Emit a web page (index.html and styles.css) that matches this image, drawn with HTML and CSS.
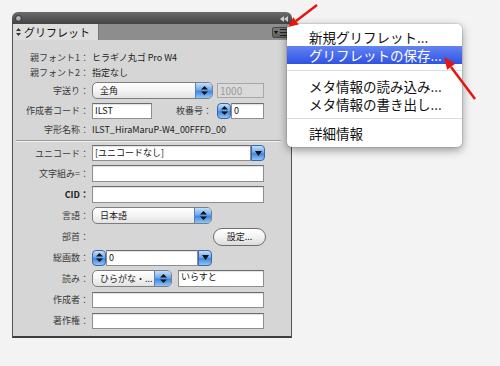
FILE: index.html
```html
<html>

<head>
  <meta charset="utf-8">
  <meta name="viewport" content="width=device-width, initial-scale=1.0">
  <link rel="stylesheet" href="styles.css">
</head>

<body>
  <div id="stage">
    <div class="panel">
      <div class="titlebar">
        <span class="close"></span>
        <svg class="collapse" width="8" height="6" viewBox="0 0 8 6">
          <polygon points="0,3 4,0 4,6" fill="#cfcfcf" />
          <polygon points="4,3 8,0 8,6" fill="#cfcfcf" />
        </svg>
      </div>
      <div class="tabrow">
        <div class="tab">
          <svg class="updown" width="5" height="8" viewBox="0 0 5 8">
            <polygon points="2.5,0 5,3 0,3" fill="#333" />
            <polygon points="2.5,8 5,5 0,5" fill="#333" />
          </svg>
          グリフレット
        </div>
        <div class="menubtn">
          <svg width="15" height="9" viewBox="0 0 15 9">
            <polygon points="1,3 5,3 3,6" fill="#111" />
            <rect x="7" y="1" width="7" height="1" fill="#222" />
            <rect x="7" y="4" width="7" height="1" fill="#222" />
            <rect x="7" y="7" width="7" height="1" fill="#222" />
          </svg>
        </div>
      </div>

      <div class="body">
        <div class="row info">
          <div class="label">親フォント1：</div>
          <div class="ctrl value">ヒラギノ丸ゴ Pro W4</div>
        </div>
        <div class="row info">
          <div class="label">親フォント2：</div>
          <div class="ctrl value">指定なし</div>
        </div>
        <div class="row r20">
          <div class="label">字送り：</div>
          <div class="ctrl">
            <div class="popup w121"><span class="ptext">全角</span><span class="pbtn"><svg width="7" height="9" viewBox="0 0 7 9"><polygon points="3.5,0 7,3.5 0,3.5" fill="#111" /><polygon points="3.5,9 7,5.5 0,5.5" fill="#111" /></svg></span></div>
            <div class="field disabled w47">1000</div>
          </div>
        </div>
        <div class="row">
          <div class="label">作成者コード：</div>
          <div class="ctrl">
            <div class="field w60">ILST</div>
            <div class="sublabel">枚番号：</div>
            <div class="spin"><svg width="7" height="9" viewBox="0 0 7 9"><polygon points="3.5,0 7,3.5 0,3.5" fill="#111" /><polygon points="3.5,9 7,5.5 0,5.5" fill="#111" /></svg></div>
            <div class="field w33">0</div>
          </div>
        </div>
        <div class="row r16">
          <div class="label">字形名称：</div>
          <div class="ctrl value">ILST_HiraMaruP-W4_00FFFD_00</div>
        </div>

        <div class="sep"></div>

        <div class="row r20">
          <div class="label">ユニコード：</div>
          <div class="ctrl">
            <div class="field w159">[ユニコードなし]</div>
            <div class="dbtn"><svg width="7" height="5" viewBox="0 0 7 5"><polygon points="0,0 7,0 3.5,5" fill="#111" /></svg></div>
          </div>
        </div>
        <div class="row">
          <div class="label">文字組み=：</div>
          <div class="ctrl"><div class="field tall w172"></div></div>
        </div>
        <div class="row">
          <div class="label cid">CID：</div>
          <div class="ctrl"><div class="field tall w172"></div></div>
        </div>
        <div class="row">
          <div class="label">言語：</div>
          <div class="ctrl">
            <div class="popup w120"><span class="ptext">日本語</span><span class="pbtn"><svg width="7" height="9" viewBox="0 0 7 9"><polygon points="3.5,0 7,3.5 0,3.5" fill="#111" /><polygon points="3.5,9 7,5.5 0,5.5" fill="#111" /></svg></span></div>
          </div>
        </div>
        <div class="row">
          <div class="label">部首：</div>
          <div class="ctrl">
            <div class="pill">設定...</div>
          </div>
        </div>
        <div class="row">
          <div class="label">総画数：</div>
          <div class="ctrl">
            <div class="spin"><svg width="7" height="9" viewBox="0 0 7 9"><polygon points="3.5,0 7,3.5 0,3.5" fill="#111" /><polygon points="3.5,9 7,5.5 0,5.5" fill="#111" /></svg></div>
            <div class="field w92">0</div>
            <div class="dbtn"><svg width="7" height="5" viewBox="0 0 7 5"><polygon points="0,0 7,0 3.5,5" fill="#111" /></svg></div>
          </div>
        </div>
        <div class="row">
          <div class="label">読み：</div>
          <div class="ctrl">
            <div class="popup w80"><span class="ptext">ひらがな・...</span><span class="pbtn"><svg width="7" height="9" viewBox="0 0 7 9"><polygon points="3.5,0 7,3.5 0,3.5" fill="#111" /><polygon points="3.5,9 7,5.5 0,5.5" fill="#111" /></svg></span></div>
            <div class="field tall top w86">いらすと</div>
          </div>
        </div>
        <div class="row">
          <div class="label">作成者：</div>
          <div class="ctrl"><div class="field w172"></div></div>
        </div>
        <div class="row">
          <div class="label">著作権：</div>
          <div class="ctrl"><div class="field w172"></div></div>
        </div>
      </div>
    </div>

    <!-- flyout menu from the panel button -->
    <div class="menu">
      <div class="item">新規グリフレット...</div>
      <div class="item active">グリフレットの保存...</div>
      <div class="msep first"></div>
      <div class="item">メタ情報の読み込み...</div>
      <div class="item">メタ情報の書き出し...</div>
      <div class="msep"></div>
      <div class="item">詳細情報</div>
    </div>

    <svg class="arrows" width="500" height="366" viewBox="0 0 500 366">
      <line x1="317" y1="5" x2="296" y2="21" stroke="#e3170f" stroke-width="2.5" />
      <polygon points="288,27 298.7,24.6 293.3,17.3" fill="#e3170f" />
      <line x1="475" y1="99" x2="451" y2="67" stroke="#e3170f" stroke-width="2.5" />
      <polygon points="444,57 455.2,63.7 447.2,69.7" fill="#e3170f" />
    </svg>
  </div>
</body>

</html>
```

FILE: styles.css
```css
* {
  box-sizing: border-box;
}

body {
  margin: 0;
  padding: 0;
  background-color: #f3f3f3;
  font-family: "Noto Sans CJK JP", "Noto Sans", sans-serif;
}

#stage {
  position: relative;
  width: 500px;
  height: 366px;
  overflow: hidden;
}

.panel {
  margin-left: 12px;
  padding-top: 12px;
  width: 280px;
}

.titlebar {
  display: flex;
  align-items: center;
  justify-content: space-between;
  height: 12px;
  padding: 0 4px 0 3px;
  border-radius: 6px 6px 0 0;
  background: linear-gradient(#6c6c6c, #434343);
}

.close {
  width: 7px;
  height: 7px;
  border-radius: 50%;
  background: radial-gradient(circle at 40% 35%, #c8c8c8, #7a7a7a);
  border: 1px solid #3a3a3a;
}

.titlebar .collapse {
  margin-top: 1px;
}

.tabrow {
  display: flex;
  align-items: stretch;
  height: 16px;
  background-color: #8d8d8d;
  border-left: 1px solid #555;
  border-right: 1px solid #555;
}

.tab {
  display: flex;
  align-items: center;
  gap: 3px;
  width: 86px;
  padding-left: 3px;
  background-color: #dedede;
  border-right: 1px solid #777;
  font-size: 11px;
  line-height: 16px;
  color: #111;
}

.menubtn {
  display: flex;
  align-items: center;
  justify-content: center;
  margin: 3px 2px 2px auto;
  width: 17px;
  border-radius: 2px;
  background: linear-gradient(#7a7a7a, #5f5f5f);
  border: 1px solid #4a4a4a;
}

.body {
  padding: 10px 0 5px 0;
  background-color: #d6d6d6;
  border: 1px solid #555;
  border-top: none;
  border-bottom: 2px solid #3e3e3e;
}

.row {
  display: flex;
  align-items: center;
  height: 21px;
  font-size: 9px;
  color: #3a3a3a;
}

.row.info {
  height: 15px;
}

.row.r20 {
  height: 20px;
}

.row.r16 {
  height: 16px;
}

.label {
  width: 76px;
  margin-right: 3px;
  text-align: right;
  white-space: nowrap;
  line-height: 13px;
}

.label.cid {
  font-weight: bold;
  color: #222;
}

.ctrl {
  display: flex;
  align-items: center;
  width: 174px;
  white-space: nowrap;
}

.value {
  color: #222;
  line-height: 13px;
}

.sep {
  height: 6px;
  margin: 0 10px 0 3px;
  padding-top: 3px;
}

.sep::before {
  content: "";
  display: block;
  border-top: 1px solid #9c9c9c;
  border-bottom: 1px solid #f2f2f2;
}

.field {
  height: 16px;
  padding-left: 2px;
  background-color: #fff;
  border: 1px solid #8e8e8e;
  border-top-color: #6c6c6c;
  box-shadow: inset 0 1px 1px rgba(0, 0, 0, 0.12);
  font-size: 9px;
  line-height: 14px;
  color: #111;
  overflow: hidden;
}

.field.tall {
  height: 17px;
}

.field.top {
  line-height: 11px;
}

.field.disabled {
  height: 15px;
  margin-left: 4px;
  background-color: #dadada;
  border-color: #a8a8a8;
  box-shadow: none;
  color: #9a9a9a;
  font-size: 10px;
  line-height: 13px;
}

.w33 { width: 33px; }
.w47 { width: 47px; }
.w60 { width: 60px; }
.w86 { width: 86px; margin-left: 6px; }
.w92 { width: 92px; }
.w159 { width: 159px; }
.w172 { width: 172px; }

.sublabel {
  margin-left: 24px;
  width: 41px;
  font-size: 9px;
}

.popup {
  display: flex;
  height: 17px;
  border: 1px solid #7e7e7e;
  border-radius: 5px;
  background: linear-gradient(#ffffff, #f4f4f4 50%, #e2e2e2);
  overflow: hidden;
}

.w121 { width: 121px; }
.w120 { width: 120px; }
.w80 { width: 80px; }

.ptext {
  flex: 1;
  padding-left: 7px;
  font-size: 9px;
  line-height: 15px;
  color: #222;
  overflow: hidden;
}

.pbtn,
.spin,
.dbtn {
  display: flex;
  align-items: center;
  justify-content: center;
  background: linear-gradient(#c3e0fb, #6eaaee 45%, #3f86e2 55%, #8fc6f6);
}

.pbtn {
  width: 17px;
  border-left: 1px solid #5b7fb0;
}

.spin {
  width: 14px;
  height: 16px;
  border: 1px solid #3d66a8;
  border-radius: 4px;
}

.dbtn {
  width: 14px;
  height: 16px;
  border: 1px solid #3d66a8;
  border-radius: 0 4px 4px 0;
}

.pill {
  margin-left: auto;
  width: 53px;
  height: 18px;
  border: 1px solid #6f6f6f;
  border-radius: 9px;
  background: linear-gradient(#ffffff, #f2f2f2 50%, #dcdcdc);
  text-align: center;
  font-size: 9px;
  line-height: 16px;
  color: #222;
}

/* menu */

.menu {
  position: absolute;
  left: 287px;
  top: 24px;
  width: 175px;
  height: 123px;
  padding-top: 4px;
  background-color: #ffffff;
  border-radius: 5px;
  box-shadow: 0 3px 10px rgba(0, 0, 0, 0.4), 0 0 0 1px rgba(0, 0, 0, 0.08);
}

.item {
  height: 18px;
  padding-left: 22px;
  font-size: 13.5px;
  line-height: 18px;
  color: #111;
  white-space: nowrap;
  overflow: hidden;
}

.item.active {
  background: linear-gradient(#6483f3, #2f53e4);
  color: #fff;
}

.msep {
  height: 11px;
  padding-top: 5px;
}

.msep.first {
  height: 13px;
  padding-top: 6px;
}

.msep::before {
  content: "";
  display: block;
  border-top: 1px solid #dcdcdc;
}

.arrows {
  position: absolute;
  left: 0;
  top: 0;
  pointer-events: none;
}
```
